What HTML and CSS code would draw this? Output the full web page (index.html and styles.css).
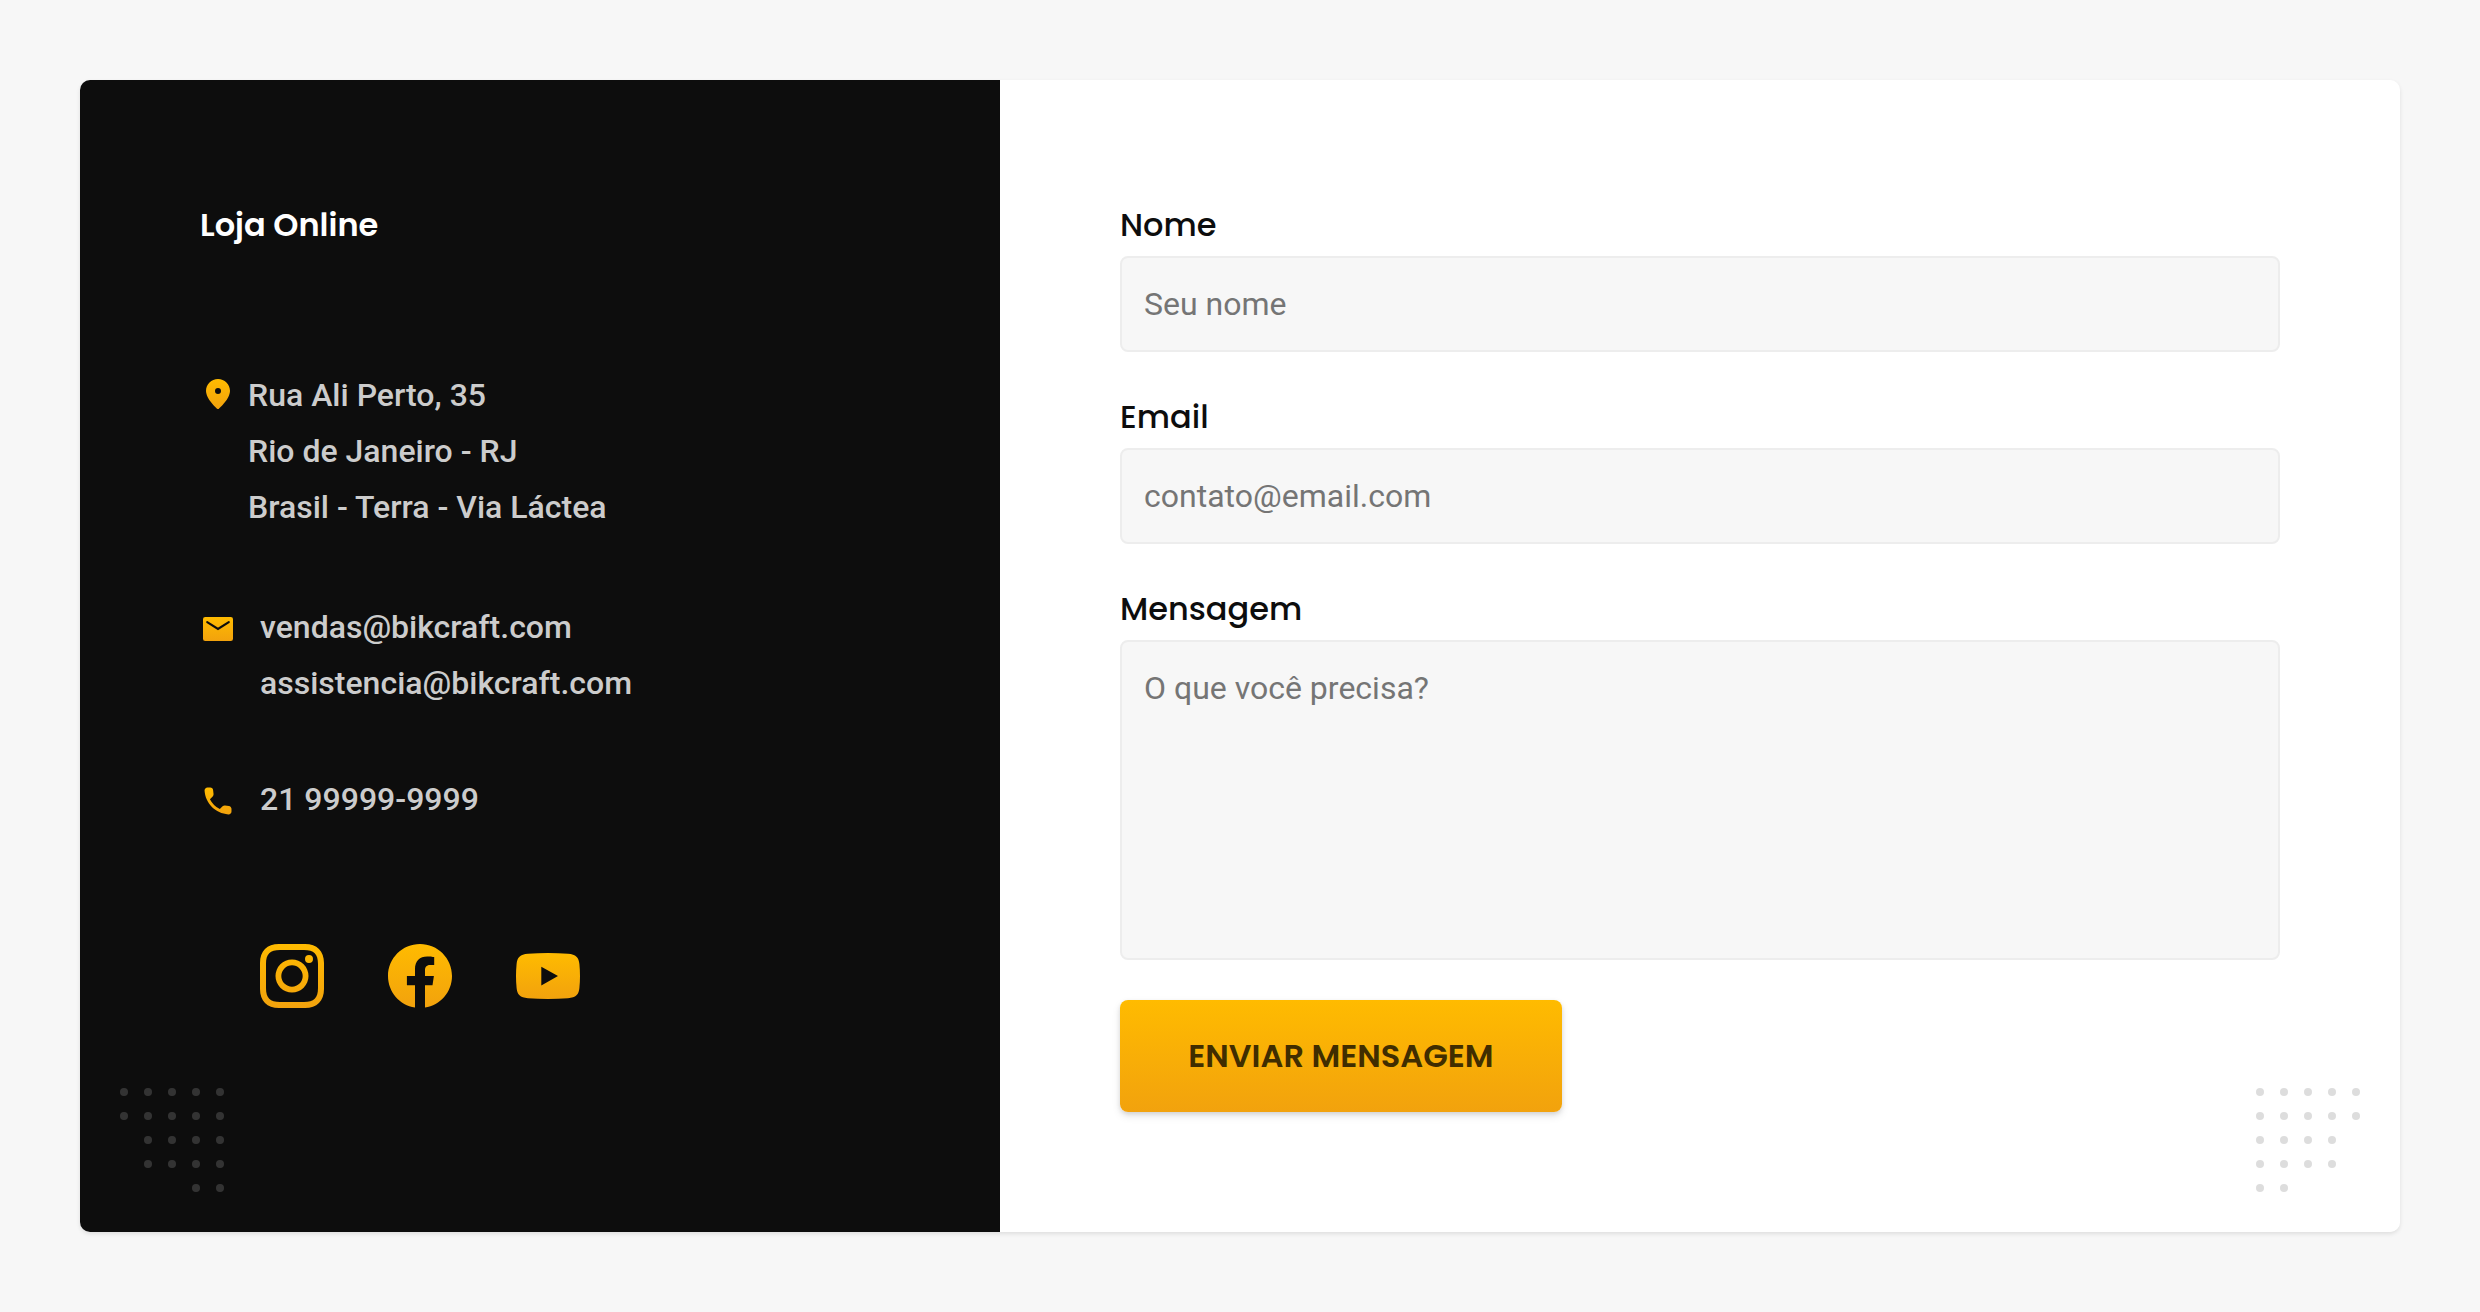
FILE: index.html
```html
<!DOCTYPE html>
<html lang="pt-BR">
<head>
<meta charset="utf-8">
<meta name="viewport" content="width=device-width, initial-scale=1">
<title>Contato</title>
<link rel="stylesheet" href="styles.css">
</head>
<body>
<svg class="defs" width="0" height="0" aria-hidden="true">
  <defs>
    <linearGradient id="gold" x1="0" y1="0" x2="0" y2="1">
      <stop offset="0" stop-color="#ffbb00"/>
      <stop offset="1" stop-color="#f2a20d"/>
    </linearGradient>
    <pattern id="dots" width="24" height="24" patternUnits="userSpaceOnUse">
      <circle cx="4" cy="4" r="4" fill="#dddddd"/>
    </pattern>
    <pattern id="dots-dark" width="24" height="24" patternUnits="userSpaceOnUse">
      <circle cx="4" cy="4" r="4" fill="#333333"/>
    </pattern>
  </defs>
</svg>
<main class="contact">
  <section class="info">
    <h1 class="title">Loja Online</h1>
    <address class="details">
      <div class="detail detail-place">
        <svg class="icon" viewBox="0 0 24 24" aria-hidden="true"><path fill="url(#gold)" fill-rule="evenodd" d="M12 2C7.6 2 4 5.400 4 9.900C4 15.400 11.050 21.500 11.350 21.800C11.750 22.100 12.250 22.100 12.650 21.800C12.950 21.500 20 15.400 20 9.900C20 5.400 16.400 2 12 2ZM12 8a2 2 0 1 1 0 4a2 2 0 1 1 0-4Z"/></svg>
        <div>
          <p class="line">Rua Ali Perto, 35</p>
          <p class="line">Rio de Janeiro - RJ</p>
          <p class="line">Brasil - Terra - Via Láctea</p>
        </div>
      </div>
      <div class="detail">
        <svg class="icon" viewBox="0 0 24 24" aria-hidden="true"><rect x="2" y="4" width="20" height="16" rx="1.500" fill="url(#gold)"/><path fill="none" stroke="#0d0d0d" stroke-width="1.400" stroke-linecap="round" d="M4.800 7.400L12 12L19.200 7.400"/></svg>
        <div>
          <a class="line" href="mailto:vendas@bikcraft.com">vendas@bikcraft.com</a>
          <a class="line" href="mailto:assistencia@bikcraft.com">assistencia@bikcraft.com</a>
        </div>
      </div>
      <div class="detail">
        <svg class="icon" viewBox="0 0 24 24" aria-hidden="true"><path fill="url(#gold)" d="M19.230 15.260l-2.540-.29a1.990 1.990 0 0 0-1.640.57l-1.840 1.840a15.045 15.045 0 0 1-6.590-6.590l1.850-1.850c.43-.43.64-1.030.57-1.640l-.29-2.520a2.001 2.001 0 0 0-1.990-1.770H5.030c-1.130 0-2.070.94-2 2.070.53 8.540 7.360 15.360 15.890 15.890 1.130.07 2.070-.87 2.070-2v-1.730c.01-1.010-.75-1.860-1.760-1.980z"/></svg>
        <div><a class="line" href="tel:+5521999999999">21 99999-9999</a></div>
      </div>
    </address>
    <nav class="social" aria-label="Redes sociais">
      <a href="#instagram" aria-label="Instagram"><svg class="brand" viewBox="0 0 64 64" aria-hidden="true"><path fill="url(#gold)" fill-rule="evenodd" d="M19 0H45C57 0 64 7 64 19V45C64 57 57 64 45 64H19C7 64 0 57 0 45V19C0 7 7 0 19 0ZM20 6C10 6 6 10 6 20V44C6 54 10 58 20 58H44C54 58 58 54 58 44V20C58 10 54 6 44 6ZM32 15.500A16.500 16.500 0 1 1 32 48.500A16.500 16.500 0 1 1 32 15.500ZM32 21.300A10.700 10.700 0 1 0 32 42.700A10.700 10.700 0 1 0 32 21.300ZM49 11a4 4 0 1 1 0 8a4 4 0 1 1 0-8Z"/></svg></a>
      <a href="#facebook" aria-label="Facebook"><svg class="brand" viewBox="0 0 64 64" aria-hidden="true"><path fill="url(#gold)" d="M64 32C64 14.300 49.700 0 32 0S0 14.300 0 32C0 48 11.700 61.200 27 63.600V41.300H18.900V32H27V25C27 17 31.800 12.500 39.100 12.500C42.600 12.500 46.200 13.100 46.200 13.100V21H42.200C38.200 21 37 23.500 37 26V32H45.900L44.500 41.300H37V63.600C52.300 61.200 64 48 64 32Z"/></svg></a>
      <a href="#youtube" aria-label="YouTube"><svg class="brand" viewBox="0 0 64 64" aria-hidden="true"><path fill="url(#gold)" fill-rule="evenodd" d="M12 9.800Q32 8.200 52 9.800C60 10.400 62.800 13.500 63.400 20Q64.600 32 63.400 44C62.800 50.500 60 53.600 52 54.200Q32 55.800 12 54.200C4 53.600 1.200 50.500 .6 44Q-.6 32 .6 20C1.200 13.500 4 10.400 12 9.800ZM25.300 22.800V41.500L42 32Z"/></svg></a>
    </nav>
    <svg class="dots dots-left" viewBox="0 0 104 104" aria-hidden="true"><path fill="url(#dots-dark)" d="M0 0H104V104H72V80H24V40H0Z"/></svg>
  </section>
  <form class="form">
    <div class="field">
      <label for="nome">Nome</label>
      <input type="text" id="nome" name="nome" placeholder="Seu nome">
    </div>
    <div class="field">
      <label for="email">Email</label>
      <input type="email" id="email" name="email" placeholder="contato@email.com">
    </div>
    <div class="field">
      <label for="mensagem">Mensagem</label>
      <textarea id="mensagem" name="mensagem" placeholder="O que você precisa?"></textarea>
    </div>
    <button class="submit" type="submit">ENVIAR MENSAGEM</button>
    <svg class="dots dots-right" viewBox="0 0 104 104" aria-hidden="true"><path fill="url(#dots)" d="M0 0H104V40H80V80H32V104H0Z"/></svg>
  </form>
</main>
</body>
</html>
```
FILE: styles.css
```css
*,
*::before,
*::after {
  box-sizing: border-box;
}

body {
  margin: 0;
  padding: 80px;
  background: #f7f7f7;
  color: #0d0d0d;
  font-family: Roboto, "Liberation Sans", sans-serif;
  font-size: 32px;
}

h1,
p {
  margin: 0;
}

.defs {
  position: absolute;
}

.contact {
  display: grid;
  grid-template-columns: 23fr 35fr;
  border-radius: 10px;
  box-shadow: 0 2px 4px rgba(0, 0, 0, 0.1);
}

.info,
.form {
  position: relative;
  padding: 120px;
}

.info {
  background: #0d0d0d;
  border-radius: 10px 0 0 10px;
}

.form {
  display: flex;
  flex-direction: column;
  gap: 40px;
  background: #ffffff;
  border-radius: 0 10px 10px 0;
}

.title {
  color: #ffffff;
  font-family: Poppins, Inter, sans-serif;
  font-size: 32px;
  font-weight: 600;
  line-height: 50px;
}

.details {
  display: flex;
  flex-direction: column;
  gap: 60px;
  margin-top: 117px;
  font-style: normal;
}

.detail {
  display: flex;
  align-items: flex-start;
  gap: 24px;
}

.detail-place {
  gap: 12px;
  padding-bottom: 4px;
}

.line {
  display: block;
  color: #cccccc;
  font-weight: 500;
  line-height: 56px;
  text-decoration: none;
}

.icon {
  display: block;
  flex: none;
  width: 36px;
  height: 36px;
  margin-top: 12px;
}

.detail-place .icon {
  margin-top: 9px;
}

.social {
  display: flex;
  gap: 64px;
  margin-top: 117px;
  padding-left: 60px;
}

.brand {
  display: block;
  width: 64px;
  height: 64px;
}

.dots {
  position: absolute;
  bottom: 40px;
  width: 104px;
  height: 104px;
}

.dots-left {
  left: 40px;
}

.dots-right {
  right: 40px;
}

.field {
  display: flex;
  flex-direction: column;
  gap: 6px;
}

label {
  font-family: Poppins, Inter, sans-serif;
  font-weight: 500;
  line-height: 50px;
}

input,
textarea {
  display: block;
  width: 100%;
  height: 96px;
  padding: 22px;
  border: 2px solid #ededed;
  border-radius: 8px;
  background: #f7f7f7;
  color: #0d0d0d;
  font: inherit;
  line-height: 48px;
}

textarea {
  height: 320px;
  resize: none;
}

::placeholder {
  color: #757575;
  opacity: 1;
}

.submit {
  align-self: flex-start;
  min-width: 442px;
  padding: 32px 64px;
  border: 0;
  border-radius: 8px;
  background: linear-gradient(#ffbb00, #f2a20d);
  box-shadow: 0 2px 4px rgba(0, 0, 0, 0.1), 0 4px 8px rgba(0, 0, 0, 0.1);
  color: #402d00;
  font-family: Poppins, Inter, sans-serif;
  font-size: 32px;
  font-weight: 600;
  line-height: 48px;
}
```
